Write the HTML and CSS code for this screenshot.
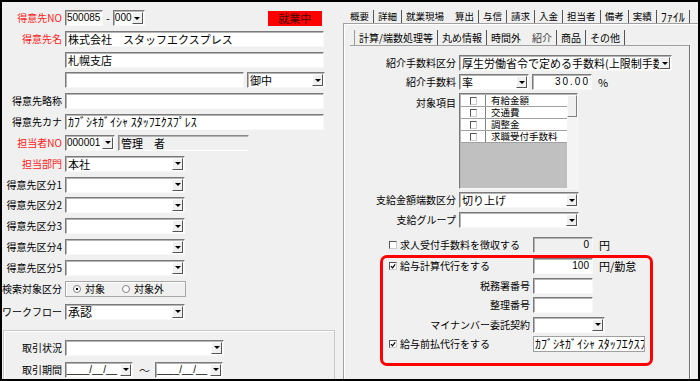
FILE: index.html
```html
<!DOCTYPE html>
<html lang="ja">
<head>
  <meta charset="UTF-8">
  <title>得意先登録</title>
  <link rel="stylesheet" href="styles.css">
</head>
<body>
  <div class="window">
    <!-- 左側：得意先基本情報 -->
    <div class="pane-left">
      <div class="row">
        <span class="lbl req">得意先NO</span>
        <div class="field w-no digits">500085</div>
        <span class="dash">-</span>
        <div class="combo w-branch"><span class="val digits">000</span><span class="drop"></span></div>
        <div class="status">就業中</div>
      </div>
      <div class="row">
        <span class="lbl req">得意先名</span>
        <div class="field w-full">株式会社　スタッフエクスプレス</div>
      </div>
      <div class="row">
        <span class="lbl"></span>
        <div class="field w-full">札幌支店</div>
      </div>
      <div class="row">
        <span class="lbl"></span>
        <div class="field w-part"></div>
        <div class="combo w-title"><span class="val">御中</span><span class="drop"></span></div>
      </div>
      <div class="row">
        <span class="lbl">得意先略称</span>
        <div class="field w-full"></div>
      </div>
      <div class="row">
        <span class="lbl">得意先カナ</span>
        <div class="field w-full kana">ｶﾌﾞｼｷｶﾞｲｼｬ ｽﾀｯﾌｴｸｽﾌﾟﾚｽ</div>
      </div>
      <div class="row">
        <span class="lbl req">担当者NO</span>
        <div class="combo w-staff"><span class="val digits">000001</span><span class="drop"></span></div>
        <div class="readonly">管理　者</div>
      </div>
      <div class="row">
        <span class="lbl req">担当部門</span>
        <div class="combo w-mid"><span class="val">本社</span><span class="drop"></span></div>
      </div>
      <div class="row">
        <span class="lbl">得意先区分1</span>
        <div class="combo w-mid"><span class="val"></span><span class="drop"></span></div>
      </div>
      <div class="row">
        <span class="lbl">得意先区分2</span>
        <div class="combo w-mid"><span class="val"></span><span class="drop"></span></div>
      </div>
      <div class="row">
        <span class="lbl">得意先区分3</span>
        <div class="combo w-mid"><span class="val"></span><span class="drop"></span></div>
      </div>
      <div class="row">
        <span class="lbl">得意先区分4</span>
        <div class="combo w-mid"><span class="val"></span><span class="drop"></span></div>
      </div>
      <div class="row">
        <span class="lbl">得意先区分5</span>
        <div class="combo w-mid"><span class="val"></span><span class="drop"></span></div>
      </div>
      <div class="row row-radio">
        <span class="lbl">検索対象区分</span>
        <div class="radio-box">
          <span class="radio on"></span><span class="radio-text">対象</span>
          <span class="radio"></span><span class="radio-text">対象外</span>
        </div>
      </div>
      <div class="row row-flow">
        <span class="lbl">ワークフロー</span>
        <div class="combo w-mid"><span class="val big">承認</span><span class="drop"></span></div>
      </div>
      <div class="group">
        <div class="row">
          <span class="lbl">取引状況</span>
          <div class="combo w-deal"><span class="val"></span><span class="drop"></span></div>
        </div>
        <div class="row">
          <span class="lbl">取引期間</span>
          <div class="combo w-date"><span class="val digits">____/__/__</span><span class="drop"></span></div>
          <span class="tilde">～</span>
          <div class="combo w-date"><span class="val digits">____/__/__</span><span class="drop"></span></div>
        </div>
      </div>
    </div>

    <!-- 右側：タブ -->
    <div class="pane-right">
      <div class="tabs">
        <span class="tab">概要</span>
        <span class="tab">詳細</span>
        <span class="tab">就業現場</span>
        <span class="tab active">算出</span>
        <span class="tab">与信</span>
        <span class="tab">請求</span>
        <span class="tab">入金</span>
        <span class="tab">担当者</span>
        <span class="tab">備考</span>
        <span class="tab">実績</span>
        <span class="tab hw">ﾌｧｲﾙ</span>
      </div>
      <div class="panel">
        <div class="subtabs">
          <span class="tab">計算/端数処理等</span>
          <span class="tab">丸め情報</span>
          <span class="tab">時間外</span>
          <span class="tab active">紹介</span>
          <span class="tab">商品</span>
          <span class="tab">その他</span>
        </div>
        <div class="inner">
          <div class="rrow">
            <span class="rlbl">紹介手数料区分</span>
            <div class="combo w-kbn"><span class="val">厚生労働省令で定める手数料(上限制手数料)</span><span class="drop"></span></div>
          </div>
          <div class="rrow">
            <span class="rlbl">紹介手数料</span>
            <div class="combo w-rate"><span class="val">率</span><span class="drop"></span></div>
            <div class="field w-num num digits spaced">30.00</div>
            <span class="unit">%</span>
          </div>
          <div class="rrow rrow-list">
            <span class="rlbl">対象項目</span>
            <div class="listbox">
              <div class="lb-body">
                <div class="lb-item"><span class="lb-chk"><span class="cb"></span></span><span class="lb-text">有給金額</span></div>
                <div class="lb-item"><span class="lb-chk"><span class="cb"></span></span><span class="lb-text">交通費</span></div>
                <div class="lb-item"><span class="lb-chk"><span class="cb"></span></span><span class="lb-text">調整金</span></div>
                <div class="lb-item"><span class="lb-chk"><span class="cb"></span></span><span class="lb-text">求職受付手数料</span></div>
              </div>
              <div class="lb-scroll"><span class="lb-thumb"></span></div>
            </div>
          </div>
          <div class="rrow">
            <span class="rlbl">支給金額端数区分</span>
            <div class="combo w-round"><span class="val">切り上げ</span><span class="drop"></span></div>
          </div>
          <div class="rrow rrow-group">
            <span class="rlbl">支給グループ</span>
            <div class="combo w-round"><span class="val"></span><span class="drop"></span></div>
          </div>
          <div class="crow crow-fee">
            <span class="clbl"><span class="cb"></span>求人受付手数料を徴収する</span>
            <div class="field w-num num digits disabled">0</div>
            <span class="unit">円</span>
          </div>
          <div class="redbox">
            <div class="crow">
              <span class="clbl"><span class="cb"><svg viewBox="0 0 7 7" width="7" height="7"><path d="M1 3 L3 5 L6 1" fill="none" stroke="#000" stroke-width="1.4"/></svg></span>給与計算代行をする</span>
              <div class="field w-num num digits">100</div>
              <span class="unit">円/勤怠</span>
            </div>
            <div class="crow">
              <span class="clbl align-r">税務署番号</span>
              <div class="field w-num"></div>
            </div>
            <div class="crow">
              <span class="clbl align-r">整理番号</span>
              <div class="field w-num"></div>
            </div>
            <div class="crow">
              <span class="clbl align-r">マイナンバー委託契約</span>
              <div class="combo w-mynum"><span class="val"></span><span class="drop"></span></div>
            </div>
            <div class="crow">
              <span class="clbl"><span class="cb"><svg viewBox="0 0 7 7" width="7" height="7"><path d="M1 3 L3 5 L6 1" fill="none" stroke="#000" stroke-width="1.4"/></svg></span>給与前払代行をする</span>
              <div class="field w-kana kana thin">ｶﾌﾞｼｷｶﾞｲｼｬ ｽﾀｯﾌｴｸｽﾌﾟﾚｽ</div>
            </div>
          </div>
        </div>
      </div>
    </div>
  </div>
</body>
</html>
```

FILE: styles.css
```css
body {
  margin: 0;
  font-family: "Noto Sans CJK JP", "Noto Sans", sans-serif;
  color: #000;
  background: #f0f0f0;
}

.window {
  width: 700px;
  height: 381px;
  box-sizing: border-box;
  border: 2px solid #000;
  background: #f0f0f0;
  display: flex;
  overflow: hidden;
}

/* ---------- 共通の入力部品 ---------- */
.field, .combo, .readonly {
  height: 16px;
  box-sizing: border-box;
  background: #fff;
  border: 1px solid;
  border-color: #7a7a7a #f8f8f8 #f8f8f8 #7a7a7a;
  box-shadow: inset 1px 1px 0 #b4b4b4;
  font-size: 11px;
  line-height: 14px;
  white-space: nowrap;
  overflow: hidden;
  flex-shrink: 0;
}

.field {
  padding: 0 2px;
}

.digits {
  font-family: "Liberation Sans", "Noto Sans CJK JP", sans-serif;
  font-size: 10px;
}

.field.digits,
.combo .val.digits {
  padding-left: 1px;
}

.field.num {
  text-align: right;
  padding-right: 3px;
}

.field.spaced {
  letter-spacing: 2px;
  padding-right: 1px;
}

.field.disabled {
  background: #f0f0f0;
}

.field.thin {
  border-color: #a0a0a0;
  box-shadow: none;
  padding-left: 1px;
}

.kana {
  font-size: 12px;
}

.combo {
  display: flex;
  align-items: center;
}

.combo .val {
  flex: 1;
  padding-left: 2px;
  line-height: 14px;
  overflow: hidden;
  white-space: nowrap;
}

.combo .val.big {
  font-size: 12px;
}

.drop {
  width: 11px;
  height: 12px;
  box-sizing: border-box;
  margin-right: 1px;
  background: #f0f0f0;
  border: 1px solid;
  border-color: #fff #555 #555 #fff;
  display: flex;
  align-items: center;
  justify-content: center;
  flex-shrink: 0;
}

.drop::after {
  content: "";
  border-left: 3px solid transparent;
  border-right: 3px solid transparent;
  border-top: 3px solid #000;
}

.readonly {
  background: #f0f0f0;
  border-color: #8a8a8a #f0f0f0 #fff #8a8a8a;
  padding-left: 2px;
}

.cb {
  display: inline-flex;
  align-items: center;
  justify-content: center;
  width: 8px;
  height: 8px;
  box-sizing: border-box;
  background: #fff;
  border: 1px solid;
  border-color: #555 #ccc #ccc #555;
  flex-shrink: 0;
}

/* ---------- 左側 ---------- */
.pane-left {
  width: 341px;
  flex-shrink: 0;
  padding-top: 8px;
  box-sizing: border-box;
}

.row {
  display: flex;
  align-items: center;
  height: 16px;
  margin-bottom: 4.83px;
}

.lbl {
  width: 60px;
  margin-right: 3px;
  text-align: right;
  font-size: 10px;
  line-height: 14px;
  white-space: nowrap;
  flex-shrink: 0;
}

.lbl.req {
  color: #ff1a1a;
}

.w-no { width: 38px; }
.w-branch { width: 32px; }
.w-full { width: 259px; }
.w-part { width: 179px; }
.w-title { width: 78px; margin-left: 3px; }
.w-staff { width: 50px; }
.w-mid { width: 120px; }
.w-deal { width: 159px; }
.w-date { width: 68px; }

.readonly {
  width: 131px;
  margin-left: 3px;
}

.dash {
  font-size: 11px;
  margin: 0 3px;
}

.status {
  margin-left: 123px;
  width: 54px;
  height: 15px;
  background: #ff0000;
  color: #4a0000;
  font-size: 11px;
  line-height: 15px;
  text-align: center;
}

.row-radio {
  margin-top: 5px;
  height: 16px;
}

.radio-box {
  width: 121px;
  height: 16px;
  box-sizing: border-box;
  border: 1px solid #a8a8a8;
  box-shadow: inset 1px 1px 0 #fff;
  display: flex;
  align-items: center;
  padding-left: 7px;
  font-size: 10px;
}

.radio {
  width: 6px;
  height: 6px;
  border: 1px solid #808080;
  border-radius: 50%;
  background: #fff;
  position: relative;
}

.radio.on::after {
  content: "";
  position: absolute;
  left: 2px;
  top: 2px;
  width: 2px;
  height: 2px;
  background: #000;
}

.radio-text {
  margin: 0 17px 0 4px;
}

.row-flow {
  margin-top: 7px;
}

.group {
  margin: 10px 8px 0 1px;
  border: 1px solid #c8c8c8;
  box-shadow: inset 1px 1px 0 #fff;
  padding-top: 9px;
  height: 60px;
}

.group .lbl {
  width: 58px;
}

.group .row {
  margin-bottom: 6px;
}

.tilde {
  font-size: 11px;
  margin: 0 5px 0 6px;
  color: #333;
}

/* ---------- 右側 ---------- */
.pane-right {
  flex: 1;
  padding-top: 8px;
  display: flex;
  flex-direction: column;
}

.tabs, .subtabs {
  display: flex;
  align-items: center;
  height: 13px;
}

.tabs {
  padding-left: 3px;
}

.tab {
  font-size: 10px;
  line-height: 13px;
  padding: 0 4px;
  border-right: 1px solid #555;
  white-space: nowrap;
}

.tabs .tab {
  font-size: 9.5px;
}

.tabs .tab.hw {
  font-size: 12px;
}

.tab.active {
  padding-left: 6px;
}

/* 選択中タブの左には区切り線を出さない */
.tabs .tab:nth-child(3),
.subtabs .tab:nth-child(3) {
  border-right-color: transparent;
}

.subtabs .tab.active {
  color: #444;
}

.panel {
  flex: 1;
  border-top: 1px solid #a0a0a0;
  border-left: 1px solid #a0a0a0;
  box-shadow: inset 1px 1px 0 #fff;
  padding-top: 6px;
}

.subtabs {
  height: 15px;
  padding-left: 10px;
}

.subtabs .tab {
  line-height: 15px;
}

.subtabs .tab:first-child {
  border-left: 1px solid #999;
}

.inner {
  margin-left: 6px;
  width: 339px;
  height: 400px;
  border-top: 1px solid #a0a0a0;
  border-right: 1px solid #707070;
  box-shadow: 1px 0 0 #fff;
  padding-top: 9px;
}

.rrow {
  display: flex;
  align-items: center;
  height: 16px;
  margin-bottom: 3px;
}

.rlbl {
  width: 106px;
  margin-right: 3px;
  text-align: right;
  font-size: 10px;
  line-height: 14px;
  white-space: nowrap;
  flex-shrink: 0;
}

.w-kbn { width: 213px; }
.w-rate { width: 70px; }
.w-num { width: 60px; margin-left: 3px; }
.w-round { width: 120px; }
.w-mynum { width: 72px; }
.w-kana { width: 112px; }

.crow .w-num { margin-left: 0; }

.unit {
  font-size: 11px;
  margin-left: 6px;
}

.rrow-list {
  height: 96px;
  align-items: flex-start;
}

.rrow-list .rlbl {
  padding-top: 3px;
}

.listbox {
  width: 119px;
  height: 96px;
  box-sizing: border-box;
  border: 1px solid;
  border-color: #7a7a7a #f8f8f8 #f8f8f8 #7a7a7a;
  box-shadow: inset 1px 1px 0 #b4b4b4;
  display: flex;
  padding: 1px 0 0 1px;
}

.lb-body {
  flex: 1;
  background: #c0c0c0;
}

.lb-item {
  display: flex;
  height: 12px;
  box-sizing: border-box;
  background: #fff;
  border-bottom: 1px solid #a0a0a0;
  font-size: 9.5px;
  line-height: 11px;
  overflow: hidden;
}

.lb-chk {
  width: 24px;
  border-right: 1px solid #808080;
  display: flex;
  align-items: center;
  justify-content: center;
  flex-shrink: 0;
}

.lb-chk .cb {
  width: 7px;
  height: 8px;
}

.lb-text {
  padding-left: 5px;
  white-space: nowrap;
  overflow: hidden;
}

.lb-scroll {
  width: 10px;
  background: #f4f4f4;
}

.lb-thumb {
  display: block;
  height: 22px;
  box-sizing: border-box;
  border: 1px solid;
  border-color: #fff #808080 #808080 #fff;
  background: #f0f0f0;
}

.rrow-group {
  margin-top: 4px;
}

.crow {
  display: flex;
  align-items: center;
  height: 16px;
  margin-bottom: 3.5px;
}

.clbl {
  width: 147px;
  margin-right: 3px;
  font-size: 10px;
  line-height: 14px;
  white-space: nowrap;
  display: flex;
  align-items: center;
  padding-left: 6px;
  box-sizing: border-box;
  flex-shrink: 0;
}

.clbl .cb {
  margin-right: 3px;
}

.clbl.align-r {
  justify-content: flex-end;
  padding-left: 0;
}

.crow-fee {
  margin: 9px 0 2px 33px;
}

.redbox {
  margin-left: 30px;
  width: 273px;
  height: 111px;
  box-sizing: border-box;
  border: 3px solid #ff0000;
  border-radius: 7px;
}
```
